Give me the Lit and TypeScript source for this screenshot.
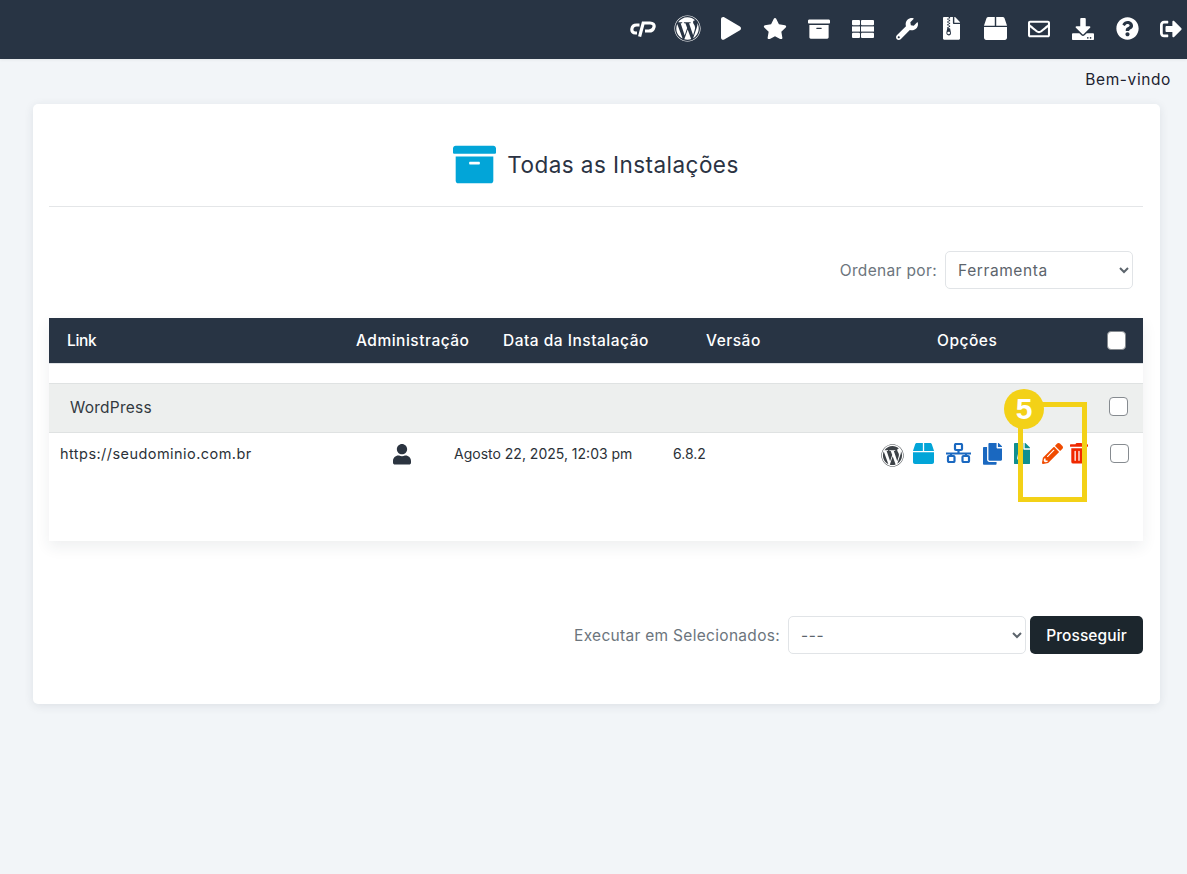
import { LitElement, html, css, svg } from 'lit';
import { customElement } from 'lit/decorators.js';

const WP = 'M61.7 169.4l101.5 278C92.2 413 43.3 340.2 43.3 256c0-30.9 6.6-60.1 18.4-86.6zm337.9 75.9c0-26.3-9.4-44.5-17.5-58.7-10.8-17.5-20.9-32.4-20.9-49.9 0-19.6 14.8-37.8 35.7-37.8.9 0 1.8.1 2.8.2-37.9-34.7-88.3-55.9-143.7-55.9-74.3 0-139.7 38.1-177.8 95.9 5 .2 9.7.3 13.7.3 22.2 0 56.7-2.7 56.7-2.7 11.5-.7 12.8 16.2 1.4 17.5 0 0-11.5 1.3-24.3 2l77.5 230.4L249.8 247l-33.1-90.8c-11.5-.7-22.3-2-22.3-2-11.5-.7-10.1-18.2 1.3-17.5 0 0 35.1 2.7 56 2.7 22.2 0 56.7-2.7 56.7-2.7 11.5-.7 12.8 16.2 1.4 17.5 0 0-11.5 1.3-24.3 2l76.9 228.7 21.2-70.9c9-29.4 16-50.5 16-68.7zm-139.9 29.4l-63.8 185.5c19.1 5.6 39.2 8.7 60.1 8.7 24.8 0 48.5-4.3 70.6-12.1-.6-.9-1.1-1.9-1.5-2.9l-65.4-179.2zm183-120.7c.9 6.8 1.4 14 1.4 21.9 0 21.6-4 45.8-16.2 76.2l-65 187.9C426.2 403 468.7 334.5 468.7 256c0-37-9.4-71.8-26-102.1zM504 256c0 136.8-111.3 248-248 248C119.2 504 8 392.7 8 256 8 119.2 119.2 8 256 8c136.7 0 248 111.2 248 248zm-11.4 0c0-130.5-106.2-236.6-236.6-236.6C125.5 19.4 19.4 125.5 19.4 256S125.6 492.6 256 492.6c130.5 0 236.6-106.1 236.6-236.6z';
const PLAY = 'M424.4 214.7L72.4 6.6C43.8-10.3 0 6.1 0 47.9V464c0 37.5 40.7 60.1 72.4 41.3l352-208c31.4-18.5 31.5-64.1 0-82.6z';
const STAR = 'M259.3 17.8L194 150.2 47.9 171.5c-26.2 3.8-36.7 36.1-17.7 54.6l105.7 103-25 145.5c-4.5 26.3 23.2 46 46.4 33.7L288 439.6l130.7 68.7c23.2 12.2 50.9-7.4 46.4-33.7l-25-145.5 105.7-103c19-18.5 8.5-50.8-17.7-54.6L382 150.2 316.7 17.8c-11.7-23.6-45.6-23.9-57.4 0z';
const ARCHIVE = 'M32 448c0 17.7 14.3 32 32 32h384c17.7 0 32-14.3 32-32V160H32v288zm160-212c0-6.6 5.4-12 12-12h104c6.6 0 12 5.4 12 12v8c0 6.6-5.4 12-12 12H204c-6.6 0-12-5.4-12-12v-8zM480 32H32C14.3 32 0 46.3 0 64v48c0 8.8 7.2 16 16 16h480c8.8 0 16-7.2 16-16V64c0-17.7-14.3-32-32-32z';
const WRENCH = 'M507.73 109.1c-2.24-9.03-13.54-12.09-20.12-5.51l-74.36 74.36-67.88-11.31-11.31-67.88 74.36-74.36c6.62-6.62 3.43-17.9-5.66-20.16-47.38-11.74-99.55.91-136.58 37.93-39.64 39.64-50.55 97.1-34.05 147.2L18.74 402.76c-24.99 24.99-24.99 65.51 0 90.5 24.99 24.99 65.51 24.99 90.5 0l213.21-213.21c50.12 16.71 107.47 5.68 147.37-34.22 37.07-37.07 49.7-89.32 37.91-136.73zM64 472c-13.25 0-24-10.75-24-24 0-13.26 10.75-24 24-24s24 10.74 24 24c0 13.25-10.75 24-24 24z';
const FILE_ZIP = 'M377 105L279.1 7c-4.5-4.5-10.6-7-17-7H256v128h128v-6.1c0-6.3-2.5-12.4-7-16.9zM128.4 336c-17.9 0-32.4 12.1-32.4 27 0 15 14.6 27 32.5 27s32.4-12.1 32.4-27-14.6-27-32.5-27zM224 136V0h-63.6v32h-32V0H24C10.7 0 0 10.7 0 24v464c0 13.3 10.7 24 24 24h336c13.3 0 24-10.7 24-24V160H248c-13.2 0-24-10.8-24-24zM95.9 32h32v32h-32zm32.3 384c-33.2 0-58-30.4-51.4-62.9L96.4 256v-32h32v-32h-32v-32h32v-32h-32V96h32V64h32v32h-32v32h32v32h-32v32h32v32h-32v32h22.1c5.7 0 10.7 4.1 11.8 9.7l17.3 87.7c6.4 32.4-18.4 62.6-51.4 62.6z';
const BOX = 'M509.5 184.6L458.9 32.8C452.4 13.2 434.1 0 413.4 0H272v192h238.7c-.4-2.5-.4-5-1.2-7.4zM240 0H98.6c-20.7 0-39 13.2-45.5 32.8L2.5 184.6c-.8 2.4-.8 4.9-1.2 7.4H240V0zM0 224v240c0 26.5 21.5 48 48 48h416c26.5 0 48-21.5 48-48V224H0z';
const ENVELOPE = 'M464 64H48C21.49 64 0 85.49 0 112v288c0 26.51 21.49 48 48 48h416c26.51 0 48-21.49 48-48V112c0-26.51-21.49-48-48-48zm0 48v40.805c-22.422 18.259-58.168 46.651-134.587 106.49-16.841 13.247-50.201 45.072-73.413 44.701-23.208.375-56.579-31.459-73.413-44.701C106.18 199.465 70.425 171.067 48 152.805V112h416zM48 400V214.398c22.914 18.251 55.409 43.862 104.938 82.646 21.857 17.205 60.134 55.186 103.062 54.955 42.717.231 80.509-37.199 103.053-54.947 49.528-38.783 82.032-64.401 104.947-82.653V400H48z';
const DOWNLOAD = 'M216 0h80c13.3 0 24 10.7 24 24v168h87.7c17.8 0 26.7 21.5 14.1 34.1L269.7 378.3c-7.5 7.5-19.8 7.5-27.3 0L90.1 226.1c-12.6-12.6-3.7-34.1 14.1-34.1H192V24c0-13.3 10.7-24 24-24zm296 376v112c0 13.3-10.7 24-24 24H24c-13.3 0-24-10.7-24-24V376c0-13.3 10.7-24 24-24h146.7l49 49c20.1 20.1 52.5 20.1 72.6 0l49-49H488c13.3 0 24 10.7 24 24zm-124 88c0-11-9-20-20-20s-20 9-20 20 9 20 20 20 20-9 20-20zm64 0c0-11-9-20-20-20s-20 9-20 20 9 20 20 20 20-9 20-20z';
const QUESTION = 'M504 256c0 136.997-111.043 248-248 248S8 392.997 8 256C8 119.083 119.043 8 256 8s248 111.083 248 248zM262.655 90c-54.497 0-89.255 22.957-116.549 63.758-3.536 5.286-2.353 12.415 2.715 16.258l34.699 26.31c5.205 3.947 12.621 3.008 16.665-2.122 17.864-22.658 30.113-35.797 57.303-35.797 20.429 0 45.698 13.148 45.698 32.958 0 14.976-12.363 22.667-32.534 33.976C247.128 238.528 216 254.941 216 296v4c0 6.627 5.373 12 12 12h56c6.627 0 12-5.373 12-12v-1.333c0-28.462 83.186-29.647 83.186-106.667 0-58.002-60.165-102-116.531-102zM256 338c-25.365 0-46 20.635-46 46 0 25.364 20.635 46 46 46s46-20.636 46-46c0-25.365-20.635-46-46-46z';
const SIGNOUT = 'M497 273L329 441c-15 15-41 4.5-41-17v-96H152c-13.3 0-24-10.7-24-24v-96c0-13.3 10.7-24 24-24h136V88c0-21.4 25.9-32 41-17l168 168c9.3 9.4 9.3 24.6 0 34zM192 436v-40c0-6.6-5.4-12-12-12H96c-17.7 0-32-14.3-32-32V160c0-17.7 14.3-32 32-32h84c6.6 0 12-5.4 12-12V76c0-6.6-5.4-12-12-12H96c-53 0-96 43-96 96v192c0 53 43 96 96 96h84c6.6 0 12-5.4 12-12z';
const USER = 'M224 256c70.7 0 128-57.3 128-128S294.7 0 224 0 96 57.3 96 128s57.3 128 128 128zm89.6 32h-16.7c-22.2 10.2-46.9 16-72.9 16s-50.6-5.8-72.9-16h-16.7C60.2 288 0 348.2 0 422.4V464c0 26.5 21.5 48 48 48h352c26.5 0 48-21.5 48-48v-41.6c0-74.2-60.2-134.4-134.4-134.4z';
const COPY = 'M320 448v40c0 13.255-10.745 24-24 24H24c-13.255 0-24-10.745-24-24V120c0-13.255 10.745-24 24-24h72v296c0 30.879 25.121 56 56 56h168zm0-344V0H152c-13.255 0-24 10.745-24 24v368c0 13.255 10.745 24 24 24h272c13.255 0 24-10.745 24-24V128H344c-13.2 0-24-10.8-24-24zm120.971-31.029L375.029 7.029A24 24 0 0 0 358.059 0H352v96h96v-6.059a24 24 0 0 0-7.029-16.97z';
const PENCIL = 'M497.9 142.1l-46.1 46.1c-4.7 4.7-12.3 4.7-17 0l-111-111c-4.7-4.7-4.7-12.3 0-17l46.1-46.1c18.7-18.7 49.1-18.7 67.9 0l60.1 60.1c18.8 18.7 18.8 49.1 0 67.9zM284.2 99.8L21.6 362.4.4 483.9c-2.9 16.4 11.4 30.6 27.8 27.8l121.5-21.3 262.6-262.6c4.7-4.7 4.7-12.3 0-17l-111-111c-4.8-4.7-12.4-4.7-17.1 0zM124.1 339.9c-5.5-5.5-5.5-14.3 0-19.8l154-154c5.5-5.5 14.3-5.5 19.8 0s5.5 14.3 0 19.8l-154 154c-5.5 5.5-14.3 5.5-19.8 0zM88 424h48v36.3l-64.5 11.3-31.1-31.1L51.7 376H88v48z';
const TRASH = 'M32 464a48 48 0 0 0 48 48h288a48 48 0 0 0 48-48V128H32zm272-256a16 16 0 0 1 32 0v224a16 16 0 0 1-32 0zm-96 0a16 16 0 0 1 32 0v224a16 16 0 0 1-32 0zm-96 0a16 16 0 0 1 32 0v224a16 16 0 0 1-32 0zM432 32H312l-9.4-18.7A24 24 0 0 0 281.1 0H166.8a23.72 23.72 0 0 0-21.4 13.3L136 32H16A16 16 0 0 0 0 48v32a16 16 0 0 0 16 16h416a16 16 0 0 0 16-16V48a16 16 0 0 0-16-16z';

/** Solid icon from a single path, sized from the view box width */
function icon(d: string, vbW: number, vbH: number, w: number, color = 'currentColor') {
  const h = (w * vbH) / vbW;
  return html`<svg width=${w} height=${h} viewBox="0 0 ${vbW} ${vbH}" fill=${color}>${svg`<path d=${d}></path>`}</svg>`;
}

const cpanelLogo = html`<svg width="26" height="18" viewBox="0 0 26 18" fill="none" stroke="currentColor" stroke-width="3.2">
  <path d="M9.5 5H6.6C4 5 2.2 6.6 1.9 9 1.6 11.4 3 13 5.4 13H7"></path>
  <path d="M9.6 16.6 13.2 3H20C23 3 24.6 4.6 24 7 23.4 9.4 21.4 11 18.8 11H15"></path>
</svg>`;

const tableIcon = html`<svg width="22" height="18" viewBox="0 0 22 18" fill="currentColor">
  <rect x="0" y="0" width="8" height="5.2" rx="1"></rect><rect x="9" y="0" width="13" height="5.2" rx="1"></rect>
  <rect x="0" y="6.4" width="8" height="5.2"></rect><rect x="9" y="6.4" width="13" height="5.2"></rect>
  <rect x="0" y="12.8" width="8" height="5.2" rx="1"></rect><rect x="9" y="12.8" width="13" height="5.2" rx="1"></rect>
</svg>`;

const sitemapIcon = html`<svg width="25" height="20" viewBox="0 0 25 20" fill="none" stroke="#1a68c0" stroke-width="2.2">
  <rect x="9" y="1" width="7" height="6" rx="1"></rect>
  <rect x="2" y="13" width="6.5" height="6" rx="1"></rect>
  <rect x="16.5" y="13" width="6.5" height="6" rx="1"></rect>
  <path d="M12.5 7V10M0 10.5H25M5 10.5V13M20 10.5V13"></path>
</svg>`;

const topIcons = [
  cpanelLogo,
  icon(WP, 512, 512, 27),
  icon(PLAY, 448, 512, 20),
  icon(STAR, 576, 512, 24),
  icon(ARCHIVE, 512, 512, 22),
  tableIcon,
  icon(WRENCH, 512, 512, 22),
  icon(FILE_ZIP, 384, 512, 17),
  icon(BOX, 512, 512, 23),
  icon(ENVELOPE, 512, 512, 22),
  icon(DOWNLOAD, 512, 512, 22),
  icon(QUESTION, 512, 512, 23),
  icon(SIGNOUT, 512, 512, 22),
];

@customElement('app-root')
export class AppRoot extends LitElement {
  static styles = css`
    :host {
      display: block;
      min-height: 874px;
      background: #f2f5f8;
      font-family: 'Inter', 'Noto Sans', sans-serif;
      font-size: 14px;
      color: #2b3440;
    }

    .topbar {
      height: 59px;
      box-sizing: border-box;
      padding: 0 5px 2px 0;
      background: #283444;
      color: #fff;
      display: flex;
      justify-content: flex-end;
      align-items: center;
      gap: 22px;
      box-shadow: 0 1px 3px rgba(0, 0, 0, 0.06);
    }

    .topbar-item {
      width: 22px;
      display: flex;
      justify-content: center;
      align-items: center;
    }

    .topbar-item svg {
      flex: none;
    }

    .welcome {
      height: 45px;
      box-sizing: border-box;
      padding: 12px 16px 0 0;
      text-align: right;
      font-size: 15.5px;
      line-height: 18px;
      letter-spacing: 0.6px;
      color: #1c2230;
    }

    .card {
      position: relative;
      margin: 0 27px 0 33px;
      height: 600px;
      box-sizing: border-box;
      padding: 0 17px 0 16px;
      background: #fff;
      border-radius: 5px;
      box-shadow: 0 2px 10px rgba(40, 52, 68, 0.1);
    }

    .title {
      height: 103px;
      box-sizing: border-box;
      padding-top: 18px;
      border-bottom: 1px solid #e4e6e8;
      display: flex;
      justify-content: center;
      align-items: center;
      gap: 11px;
      font-size: 22.5px;
      letter-spacing: 0.45px;
      color: #2b3343;
    }

    .sort {
      display: flex;
      justify-content: flex-end;
      align-items: center;
      gap: 8px;
      padding: 44px 10px 29px 0;
      font-size: 15.5px;
      letter-spacing: 0.35px;
      color: #6c757d;
    }

    select {
      box-sizing: border-box;
      height: 38px;
      padding: 6px 8px;
      border: 1px solid #e1e4e7;
      border-radius: 5px;
      background: #fff;
      font-family: inherit;
      font-size: 15.5px;
      letter-spacing: 0.6px;
      color: #5c646c;
    }

    .sort select {
      width: 188px;
    }

    input[type='checkbox'] {
      appearance: none;
      box-sizing: border-box;
      width: 19px;
      height: 19px;
      margin: 0;
      background: #fff;
      border: 1px solid #868b90;
      border-radius: 4px;
    }

    .table {
      box-shadow: 0 6px 14px rgba(40, 52, 68, 0.08);
    }

    .thead {
      height: 45px;
      background: #283444;
      color: #fff;
      font-size: 15.5px;
      font-weight: 500;
      letter-spacing: 0.5px;
      display: grid;
      grid-template-columns: 289px 147px 203px 231px 170px auto;
      align-items: center;
      padding-left: 18px;
      border-bottom: 1px solid #dfe2e5;
    }

    .thead .short {
      letter-spacing: -0.3px;
    }

    .spacer {
      height: 19px;
    }

    .group {
      height: 48px;
      box-sizing: content-box;
      background: #edefee;
      border-top: 1px solid #dfe2e2;
      border-bottom: 1px solid #dfe2e2;
      display: flex;
      justify-content: space-between;
      align-items: center;
      padding: 0 15px 0 21px;
      font-size: 15.5px;
      letter-spacing: 0.25px;
      color: #33393f;
    }

    .group span {
      margin-bottom: 2px;
    }

    .group input {
      margin-top: -4px;
    }

    .row {
      height: 108px;
      box-sizing: border-box;
      display: grid;
      grid-template-columns: 333px 61px 219px 208px 229px auto;
      align-items: start;
      padding: 11px 0 0 11px;
      font-size: 14px;
      line-height: 20px;
      color: #2b3138;
    }

    .link {
      font-size: 14.5px;
      letter-spacing: 0.45px;
    }

    .actions {
      display: flex;
      align-items: flex-start;
      gap: 12px;
      margin-top: -1px;
    }

    .actions svg {
      display: block;
    }

    .wp-badge {
      width: 23px;
      height: 23px;
      margin: 1px -3px 0 0;
      border-radius: 50%;
      background: #fff;
    }

    .trash {
      margin-left: -5px;
    }

    .bottom {
      display: flex;
      justify-content: flex-end;
      align-items: center;
      gap: 4px;
      margin-top: 75px;
      font-size: 15.5px;
      letter-spacing: 0.3px;
      color: #6c757d;
    }

    .bottom select {
      width: 238px;
      margin-left: 4px;
    }

    .go {
      width: 113px;
      height: 38px;
      border: none;
      border-radius: 5px;
      background: #1c262d;
      color: #fff;
      font-family: inherit;
      font-size: 15.5px;
      font-weight: 500;
      letter-spacing: 0.1px;
    }

    /* tutorial annotation drawn over the screenshot */
    .mark-box {
      position: absolute;
      left: 985px;
      top: 298px;
      width: 69px;
      height: 100px;
      box-sizing: border-box;
      border: 5px solid #f3d117;
    }

    .mark-badge {
      position: absolute;
      left: 971px;
      top: 285px;
      width: 40px;
      height: 40px;
      border-radius: 50%;
      background: #f3d117;
      color: #fff;
      font-family: 'Liberation Sans', sans-serif;
      font-size: 30px;
      font-weight: 700;
      line-height: 40px;
      text-align: center;
    }
  `;

  render() {
    return html`
      <div class="topbar">
        ${topIcons.map((i) => html`<span class="topbar-item">${i}</span>`)}
      </div>
      <div class="welcome">Bem-vindo</div>
      <div class="card">
        <div class="title">
          ${icon(ARCHIVE, 512, 512, 43, '#02a5d8')}
          <span>Todas as Instalações</span>
        </div>
        <div class="sort">
          <span>Ordenar por:</span>
          <select><option>Ferramenta</option></select>
        </div>
        <div class="table">
          <div class="thead">
            <span class="short">Link</span>
            <span>Administração</span>
            <span>Data da Instalação</span>
            <span>Versão</span>
            <span>Opções</span>
            <input type="checkbox" />
          </div>
          <div class="spacer"></div>
          <div class="group">
            <span>WordPress</span>
            <input type="checkbox" />
          </div>
          <div class="row">
            <span class="link">https://seudominio.com.br</span>
            ${icon(USER, 448, 512, 18, '#2b3440')}
            <span>Agosto 22, 2025, 12:03 pm</span>
            <span>6.8.2</span>
            <div class="actions">
              <span class="wp-badge">${icon(WP, 512, 512, 23, '#3c4146')}</span>
              ${icon(BOX, 512, 512, 21, '#02a5d8')}
              ${sitemapIcon}
              ${icon(COPY, 448, 512, 19, '#1a68c0')}
              ${icon(FILE_ZIP, 384, 512, 16, '#108f8f')}
              ${icon(PENCIL, 512, 512, 21, '#f04b00')}
              <span class="trash">${icon(TRASH, 448, 512, 18, '#f02800')}</span>
            </div>
            <input type="checkbox" />
          </div>
        </div>
        <div class="bottom">
          <span>Executar em Selecionados:</span>
          <select><option>---</option></select>
          <button class="go">Prosseguir</button>
        </div>
        <div class="mark-box"></div>
        <div class="mark-badge">5</div>
      </div>
    `;
  }
}
